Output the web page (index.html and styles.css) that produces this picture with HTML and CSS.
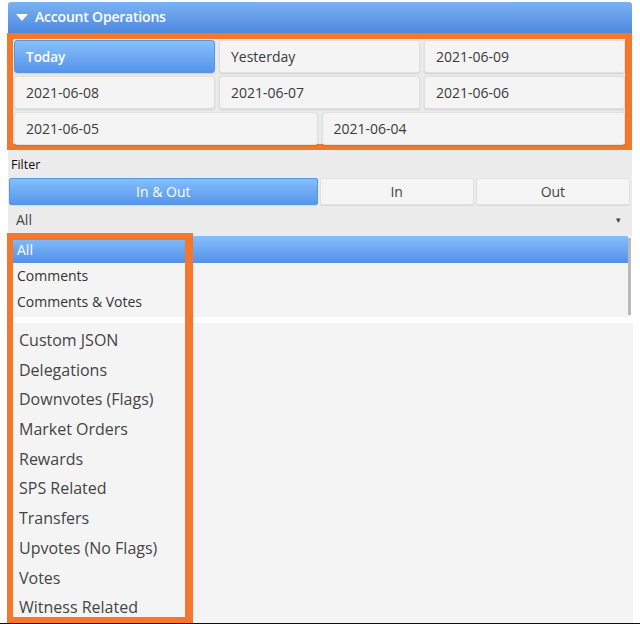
FILE: index.html
```html
<!DOCTYPE html>
<html>
<head>
<meta charset="utf-8">
<link rel="stylesheet" href="styles.css">
</head>
<body>
<div class="page">
  <div class="panel">
    <div class="header">
      <span class="tri"></span>
      <span class="title">Account Operations</span>
    </div>
    <div class="dates">
      <div class="btn active">Today</div>
      <div class="btn">Yesterday</div>
      <div class="btn">2021-06-09</div>
      <div class="btn">2021-06-08</div>
      <div class="btn">2021-06-07</div>
      <div class="btn">2021-06-06</div>
      <div class="btn wide">2021-06-05</div>
      <div class="btn wide">2021-06-04</div>
    </div>
    <div class="filter">
      <div class="label">Filter</div>
      <div class="seg">
        <div class="seg-btn active">In &amp; Out</div>
        <div class="seg-btn">In</div>
        <div class="seg-btn">Out</div>
      </div>
      <div class="select">
        <span>All</span>
        <span class="arrow">▾</span>
      </div>
    </div>
    <div class="list">
      <div class="opt sel">All</div>
      <div class="opt">Comments</div>
      <div class="opt">Comments &amp; Votes</div>
      <div class="scroll"></div>
    </div>
    <div class="big">
      <div class="item">Custom JSON</div>
      <div class="item">Delegations</div>
      <div class="item">Downvotes (Flags)</div>
      <div class="item">Market Orders</div>
      <div class="item">Rewards</div>
      <div class="item">SPS Related</div>
      <div class="item">Transfers</div>
      <div class="item">Upvotes (No Flags)</div>
      <div class="item">Votes</div>
      <div class="item">Witness Related</div>
    </div>
    <div class="mark"></div>
  </div>
  <div class="bottom-bar"></div>
</div>
</body>
</html>
```

FILE: styles.css
```css
* { box-sizing: border-box; }
html, body { margin: 0; padding: 0; background: #fff; }
body {
  font-family: "Open Sans", "Liberation Sans", sans-serif;
  color: #333;
  width: 640px;
  height: 624px;
  overflow: hidden;
}
.page {
  display: flex;
  flex-direction: column;
  height: 624px;
  padding-top: 2px;
}
.panel {
  position: relative;
  margin-left: 8px;
  width: 624px;
  flex: 1;
  display: flex;
  flex-direction: column;
}
.header {
  height: 31px;
  background: linear-gradient(#7cb2f3, #4d89de);
  border-radius: 3px 3px 0 0;
  display: flex;
  align-items: center;
  padding-left: 8px;
  color: #fff;
}
.tri {
  width: 0;
  height: 0;
  border-left: 6px solid transparent;
  border-right: 6px solid transparent;
  border-top: 7px solid #fff;
  margin-right: 7px;
  margin-top: 0;
}
.title {
  font-size: 14px;
  font-weight: 600;
  letter-spacing: -0.2px;
  margin-top: -2px;
}
.dates {
  margin-left: -1px;
  width: 625px;
  border: 6px solid #f4772b;
  border-right-width: 7px;
  background: #ececec;
  padding: 1px 0 0 1px;
  display: grid;
  grid-template-columns: repeat(6, 1fr);
  grid-auto-rows: 33px;
  gap: 3px 4px;
  height: 117px;
}
.btn {
  grid-column: span 2;
  background: #f4f4f4;
  border: 1px solid #e0e0e0;
  border-radius: 3px;
  box-shadow: 0 1px 2px rgba(0,0,0,0.12);
  font-size: 14px;
  color: #3a3a3a;
  display: flex;
  align-items: center;
  padding-left: 11px;
}
.btn.wide { grid-column: span 3; }
.btn.active {
  background: linear-gradient(#86c0fb, #5794ea);
  border-color: #5a94e6;
  color: #fff;
  font-weight: 600;
  font-size: 13.5px;
}
.filter {
  background: #ececec;
  padding: 6px 2px 2px 1px;
  height: 86px;
}
.label {
  font-size: 12.5px;
  font-weight: 400;
  color: #111;
  padding-left: 2px;
  height: 22px;
  line-height: 18px;
}
.seg {
  display: grid;
  grid-template-columns: 2fr 1fr 1fr;
  gap: 2px;
  height: 27px;
}
.seg-btn {
  background: #f5f5f5;
  border: 1px solid #e2e2e2;
  border-radius: 2px;
  font-size: 14px;
  color: #444;
  display: flex;
  align-items: center;
  justify-content: center;
  box-shadow: 0 1px 1px rgba(0,0,0,0.08);
}
.seg-btn.active {
  background: linear-gradient(#84befb, #5896ec);
  border-color: #5a94e6;
  color: #fff;
}
.select {
  height: 29px;
  display: flex;
  align-items: center;
  justify-content: space-between;
  padding: 0 9px 0 7px;
  font-size: 14px;
  color: #444;
}
.arrow { font-size: 9px; color: #444; }
.list {
  position: relative;
  width: 623px;
  background: #f4f4f4;
  height: 81px;
  padding-top: 0;
}
.opt {
  height: 25.5px;
  font-size: 14px;
  color: #333;
  display: flex;
  align-items: center;
  padding-left: 9px;
}
.opt.sel {
  height: 27px;
  background: linear-gradient(#85bffc, #5490ea);
  color: #fff;
  margin-right: 3px;
}
.scroll {
  position: absolute;
  right: 0;
  top: 2px;
  width: 3px;
  height: 77px;
  background: #b9b9b9;
}
.big {
  margin-top: 6px;
  width: 625px;
  flex: 1;
  background: #f4f4f4;
  padding-top: 3px;
  padding-left: 11px;
}
.item {
  height: 29.7px;
  line-height: 29.7px;
  font-size: 16px;
  color: #444;
  white-space: nowrap;
}
.mark {
  position: absolute;
  left: -1px;
  top: 231px;
  width: 186px;
  bottom: 0;
  border: 6px solid #f4772b;
  border-right-width: 8px;
  border-top-width: 7px;
  pointer-events: none;
}
.bottom-bar {
  height: 3px;
  background: #111;
}
```
